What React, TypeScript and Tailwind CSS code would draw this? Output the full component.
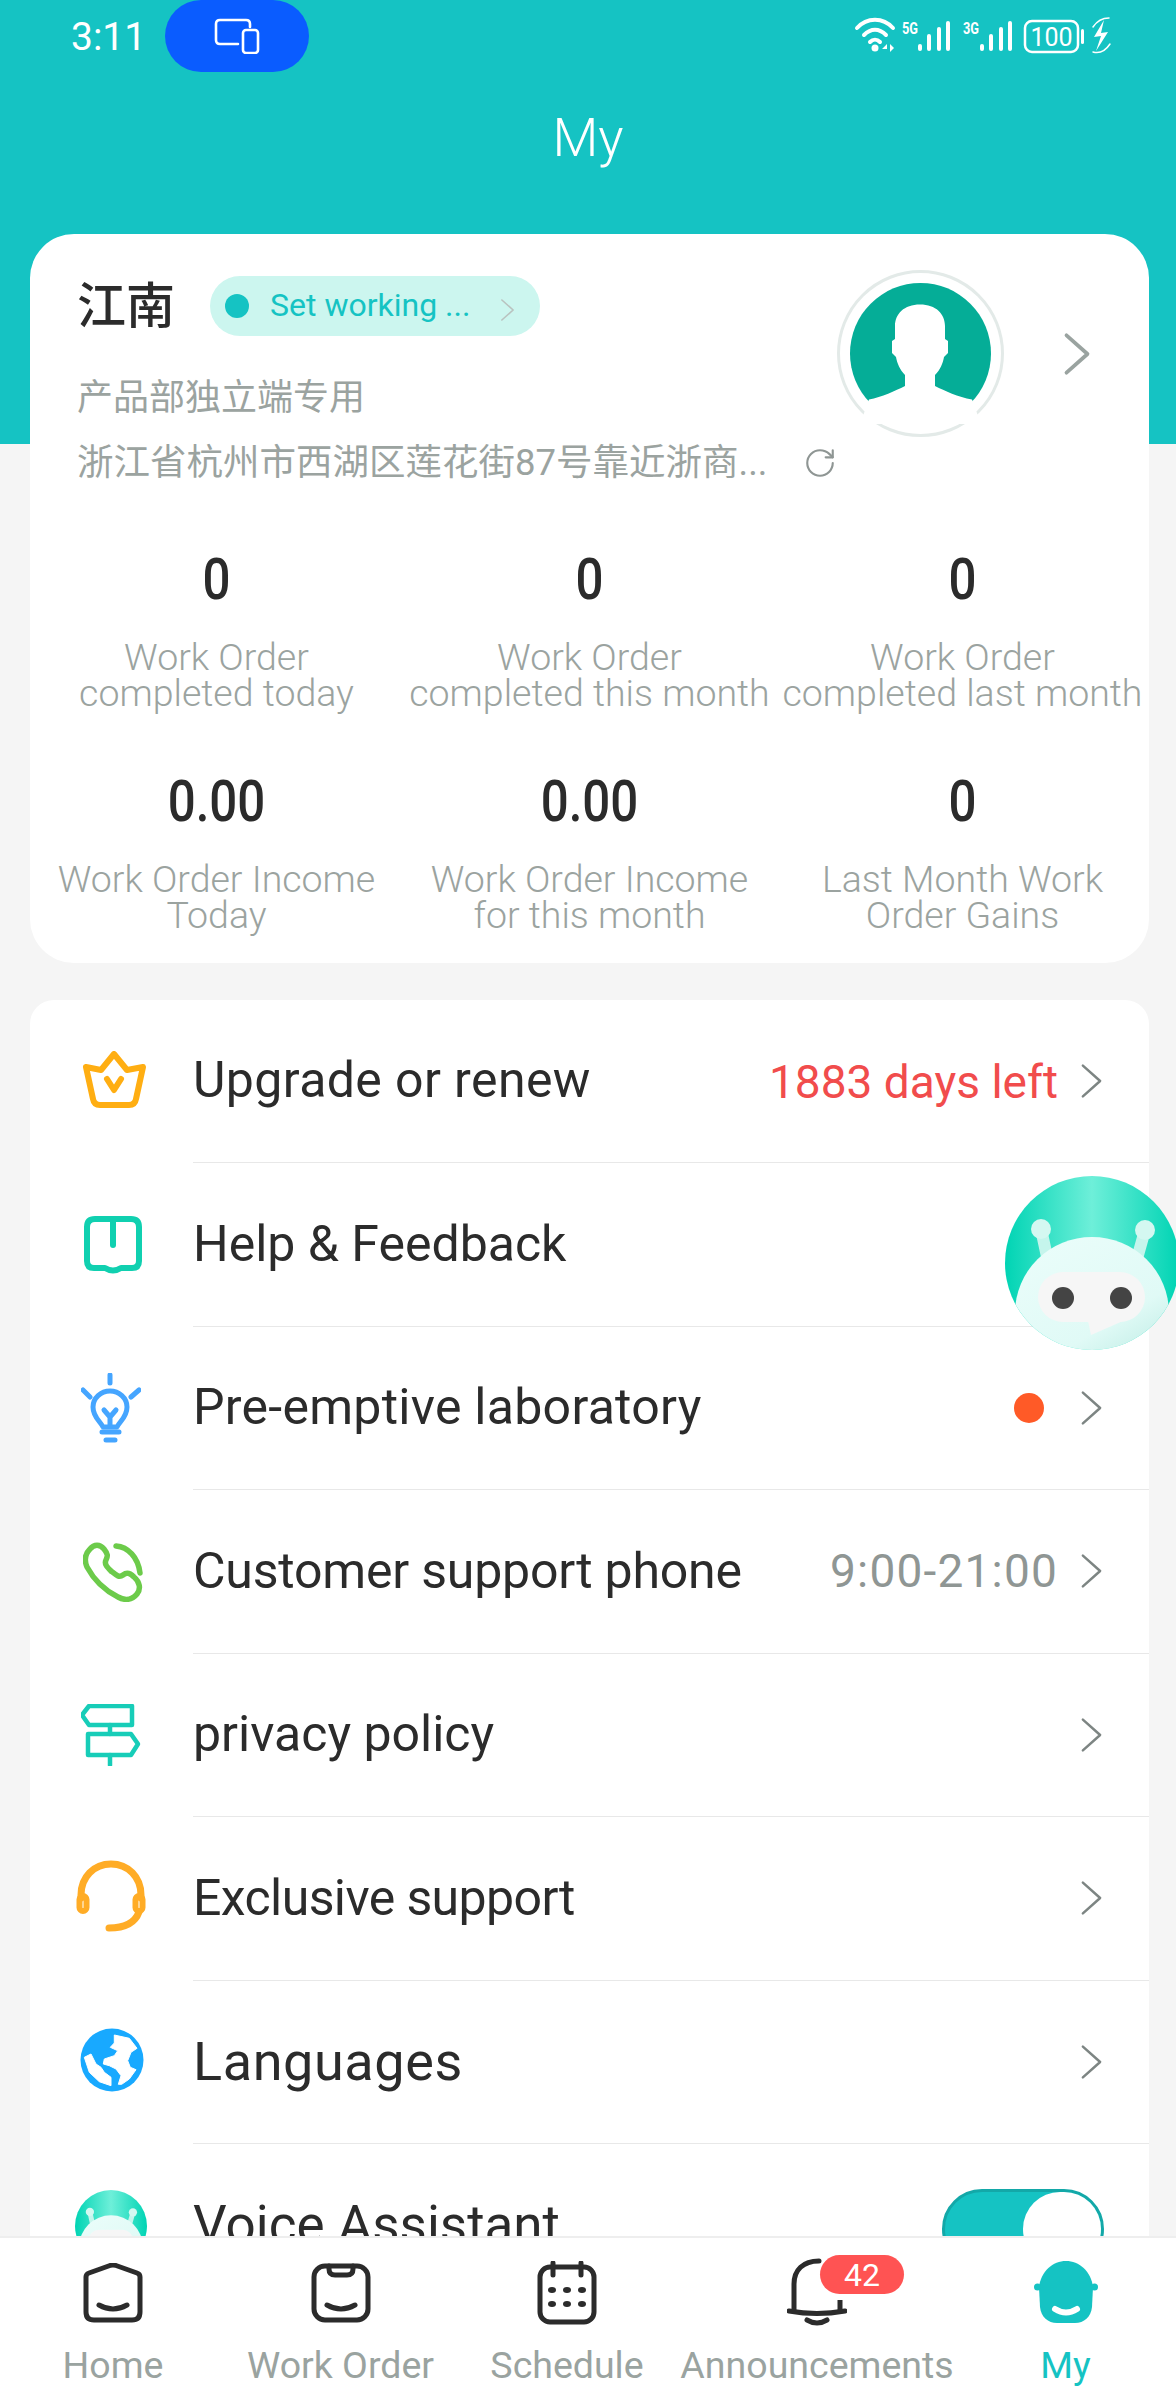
import { ReactNode } from "react";
import { RotateCw } from "lucide-react";

const TEAL = "#15c3c3";

function Chevron({ className = "" }: { className?: string }) {
  return (
    <svg className={className} viewBox="0 0 24 36" fill="none" stroke="currentColor" strokeLinecap="round" strokeLinejoin="round">
      <path d="M3 2 L21 18 L3 34" strokeWidth={2.6} />
    </svg>
  );
}

function StatusIcons() {
  return (
    <svg width="262" height="44" viewBox="0 0 262 44" fill="none" className="block">
      <g stroke="#fff" strokeWidth="4" strokeLinecap="round">
        <path d="M3 14 C13 3 29 3 39 14" />
        <path d="M10 21 C17 14 25 14 32 21" />
        <path d="M16 28 C19 25 23 25 26 28" />
      </g>
      <circle cx="21" cy="34" r="3.5" fill="#fff" />
      <path d="M33 30 l-5 5 h5 z M33 27 v11 M36 30 l4 4 -4 4 z" fill="#fff" />
      <text x="48" y="20" fill="#fff" fontSize="17" fontWeight="700" textLength="16" lengthAdjust="spacingAndGlyphs" fontFamily="Roboto, sans-serif">5G</text>
      <text x="109" y="20" fill="#fff" fontSize="17" fontWeight="700" textLength="16" lengthAdjust="spacingAndGlyphs" fontFamily="Roboto, sans-serif">3G</text>
      <g fill="#fff">
        <rect x="64" y="30" width="4" height="7" rx="2" />
        <rect x="73" y="20" width="4" height="17" rx="2" />
        <rect x="83" y="13" width="4" height="24" rx="2" />
        <rect x="92" y="7" width="4" height="30" rx="2" />
        <rect x="126" y="30" width="4" height="7" rx="2" />
        <rect x="135" y="20" width="4" height="17" rx="2" />
        <rect x="145" y="13" width="4" height="24" rx="2" />
        <rect x="154" y="7" width="4" height="30" rx="2" />
        <rect x="227" y="15" width="3" height="15" rx="1.5" />
      </g>
      <rect x="171" y="7" width="53" height="31" rx="7" stroke="#fff" strokeWidth="2.5" />
      <text x="197.5" y="32" textAnchor="middle" fill="#fff" fontSize="25" fontFamily="Roboto, sans-serif">100</text>
      <path d="M250 6 L240 23 L247 22 L242 37 L254 18 L247 19 Z" fill="#fff" />
      <path d="M239 13 C243 7 249 4 255 4 M239 38 C246 40 252 36 256 30" stroke="#fff" strokeWidth="1.5" strokeLinecap="round" />
    </svg>
  );
}

function DeviceIcon() {
  return (
    <svg width="46" height="36" viewBox="0 0 46 36" fill="none" stroke="#fff" strokeWidth="2.6" strokeLinecap="round" strokeLinejoin="round">
      <path d="M24 26 H6 Q2 26 2 22 V6 Q2 2 6 2 H32 Q36 2 36 6 V9" />
      <rect x="29" y="12" width="15" height="23" rx="3" />
    </svg>
  );
}

function Avatar() {
  return (
    <div className="flex h-[167px] w-[167px] items-center justify-center rounded-full border-[3px] border-[#e3eae8] bg-white">
      <svg width="141" height="141" viewBox="0 0 141 141">
        <circle cx="70.5" cy="70.5" r="70.5" fill="#05ad97" />
        <path
          d="M70 21.5 C54 21.5 45 31 45 43 L45 56 L42 58 V70 L46 74 C47 80 50 87 55 92 V103 C45 108 32 114 19 116.5 L10 141 H131 L122 116.5 C108 114 95 108 85 103 V92 C90 87 93 80 94 74 L98 70 V58 L95 56 V43 C95 31 86 21.5 70 21.5 Z"
          fill="#fff"
        />
      </svg>
    </div>
  );
}

function RobotIcon({ size, gradientId }: { size: number; gradientId: string }) {
  return (
    <svg width={size} height={size} viewBox="0 0 174 174" className="block">
      <defs>
        <linearGradient id={gradientId} x1="0" x2="1" y1="0" y2="0">
          <stop offset="0" stopColor="#00d4b4" />
          <stop offset="0.5" stopColor="#6eefd9" />
          <stop offset="1" stopColor="#00d4b4" />
        </linearGradient>
        <linearGradient id={`${gradientId}-h`} x1="0.2" x2="0.8" y1="0" y2="1">
          <stop offset="0" stopColor="#eafdfa" />
          <stop offset="0.6" stopColor="#e0faf6" />
          <stop offset="1" stopColor="#b4e8df" />
        </linearGradient>
        <clipPath id={`${gradientId}-c`}>
          <circle cx="87" cy="87" r="87" />
        </clipPath>
      </defs>
      <g clipPath={`url(#${gradientId}-c)`}>
        <rect width="174" height="174" fill={`url(#${gradientId})`} />
        <path d="M36 53 L44 90 M140 54 L130 90" stroke="#c5f5ec" strokeWidth="12" />
        <circle cx="36" cy="53" r="10" fill="#d4f8f1" />
        <circle cx="140" cy="54" r="10" fill="#d4f8f1" />
        <ellipse cx="87" cy="137" rx="77" ry="76" fill={`url(#${gradientId}-h)`} />
        <rect x="33" y="96" width="107" height="50" rx="25" fill="#f6f6f6" />
        <path d="M83 145 L86 159 L118 145 Z" fill="#f6f6f6" />
        <circle cx="58" cy="122" r="11" fill="#444" />
        <circle cx="116" cy="122" r="11" fill="#444" />
      </g>
    </svg>
  );
}

const CrownIcon = (
  <svg width="64" height="60" viewBox="0 0 64 60" fill="none" stroke="#ffae12" strokeWidth="6" strokeLinecap="round" strokeLinejoin="round" className="ml-[3px]">
    <path d="M31 3 L44 19 L60 16 L53 48 Q52 54 46 54 H17 Q11 54 10 48 L3 16 L18 19 Z" />
    <path d="M24 28 L31 39 L38 28" />
  </svg>
);

const BookIcon = (
  <svg width="60" height="60" viewBox="0 0 60 60" fill="none" stroke="#10d0b0" strokeWidth="6" strokeLinecap="round" strokeLinejoin="round">
    <path d="M4 46 V12 Q4 4 12 4 H48 Q56 4 56 12 V46 Q56 53 49 53 H38 Q30 58 22 53 H11 Q4 53 4 46 Z" />
    <path d="M30 4 V30" />
  </svg>
);

const BulbIcon = (
  <svg width="60" height="70" viewBox="0 0 60 70" fill="none" stroke="#45a5ff" strokeWidth="5" strokeLinecap="round" strokeLinejoin="round" className="-ml-[4px]">
    <path d="M29 2 V10 M2 17 L9 24 M58 17 L50 24" />
    <path d="M22 54 C19 48 12 44 12 34 C12 25 20 18 29 18 C38 18 46 25 46 34 C46 44 39 48 36 54 Z" />
    <path d="M23 37 L29 44 L35 37 M29 44 V53" />
    <path d="M21 59 H38 M25 67 H34" />
  </svg>
);

const PhoneIcon = (
  <svg width="60" height="60" viewBox="0 0 60 60" fill="none" stroke="#6ccb4a" strokeWidth="5.5" strokeLinecap="round" strokeLinejoin="round">
    <path d="M7 7 C11 2 17 2 21 7 C25 12 25 14 23 18 C21 22 24 25 28 29 C33 33 36 36 40 33 C44 30 47 31 51 35 C57 40 58 47 54 52 C49 58 42 59 35 55 C23 49 11 38 4 25 C1 18 2 12 7 7 Z" />
    <path d="M33 4 C45 5 55 15 57 31" />
  </svg>
);

const SignIcon = (
  <svg width="60" height="62" viewBox="0 0 60 62" fill="none" stroke="#17cdb8" strokeWidth="4.5" strokeLinecap="round" strokeLinejoin="round" className="-ml-[4px]">
    <path d="M8 2 H51 V21 H8 L1 11 Z" />
    <path d="M7 30 H50 L57 40 L50 51 H7 Z" />
    <path d="M29 21 V30 M29 51 V61" />
  </svg>
);

const HeadsetIcon = (
  <svg width="72" height="72" viewBox="0 0 72 72" fill="none" stroke="#ffac26" strokeWidth="7" strokeLinecap="round" className="-ml-[4px] -mt-[5px]">
    <path d="M6 38 V35 C6 17 19 4 36 4 C53 4 66 17 66 35 V38" />
    <rect x="4.5" y="36" width="7" height="15" rx="3.5" strokeWidth="6" />
    <rect x="60.5" y="36" width="7" height="15" rx="3.5" strokeWidth="6" />
    <path d="M64 52 C60 63 50 68 34 68" />
  </svg>
);

const GlobeIcon = (
  <svg width="64" height="64" viewBox="0 0 64 64" className="-ml-[3px] -mt-[5px]">
    <circle cx="32" cy="32" r="31.5" fill="#18a9ff" />
    <path
      d="M34.3 7 L49.3 10.3 L57 20.3 L51 24.3 L47.7 32.7 L50.3 39.3 L56 41.7 L49.3 51 L41.7 56.3 L38.3 56.3 L41 47.7 L36 41 L29.3 37.7 L23.3 36 L24.3 31 L34.3 27.7 L37.7 22.7 L30.3 19.3 L34.3 15 Z"
      fill="#fff"
      stroke="#fff"
      strokeLinejoin="round"
    />
    <path
      d="M4.3 29.3 L11 26 L16 36 L21 39.3 L24.3 44.3 L31 49.3 L31 57.7 L19.3 53.7 L9.3 44.3 Z"
      fill="#fff"
      stroke="#fff"
      strokeLinejoin="round"
    />
  </svg>
);

const menuRows: { icon: ReactNode; label: string; labelClass: string; right?: ReactNode }[] = [
  { icon: CrownIcon, label: "Upgrade or renew", labelClass: "text-[50px] tracking-[0.4px]", right: <span className="mt-[3px] text-[46px] text-[#f14c4c]">1883 days left</span> },
  { icon: BookIcon, label: "Help & Feedback", labelClass: "text-[50px]" },
  { icon: BulbIcon, label: "Pre-emptive laboratory", labelClass: "text-[50px] tracking-[0.27px]", right: <span className="mr-[14px] block h-[30px] w-[30px] rounded-full bg-[#ff5a27]" /> },
  { icon: PhoneIcon, label: "Customer support phone", labelClass: "text-[50px] tracking-[-0.2px]", right: <span className="text-[46px] tracking-[1.2px] text-[#8f9694]">9:00-21:00</span> },
  { icon: SignIcon, label: "privacy policy", labelClass: "text-[50px]" },
  { icon: HeadsetIcon, label: "Exclusive support", labelClass: "text-[50px] tracking-[-0.6px]" },
  { icon: GlobeIcon, label: "Languages", labelClass: "text-[54px] tracking-[0.6px]" },
];

const stats = [
  { value: "0", lines: ["Work Order", "completed today"] },
  { value: "0", lines: ["Work Order", "completed this month"] },
  { value: "0", lines: ["Work Order", "completed last month"] },
  { value: "0.00", lines: ["Work Order Income", "Today"] },
  { value: "0.00", lines: ["Work Order Income", "for this month"] },
  { value: "0", lines: ["Last Month Work", "Order Gains"] },
];

function Smile() {
  return <path d="M16 42 Q30 50 44 42" />;
}

const navItems: { label: string; active?: boolean; icon: ReactNode }[] = [
  {
    label: "Home",
    icon: (
      <svg width="60" height="60" viewBox="0 0 60 60" fill="none" stroke="#2b2b2b" strokeWidth="5" strokeLinecap="round" strokeLinejoin="round">
        <path d="M3 14 Q3 11 6 10 L27 2.5 Q30 1.5 33 2.5 L54 10 Q57 11 57 14 V49 Q57 57 49 57 H11 Q3 57 3 49 Z" />
        <Smile />
      </svg>
    ),
  },
  {
    label: "Work Order",
    icon: (
      <svg width="60" height="60" viewBox="0 0 60 60" fill="none" stroke="#2b2b2b" strokeWidth="5" strokeLinecap="round" strokeLinejoin="round">
        <rect x="3" y="3" width="54" height="54" rx="11" />
        <path d="M18 3 V6 Q18 12 24 12 H36 Q42 12 42 6 V3" />
        <Smile />
      </svg>
    ),
  },
  {
    label: "Schedule",
    icon: (
      <svg width="60" height="64" viewBox="0 0 60 64" fill="none" stroke="#2b2b2b" strokeWidth="5" strokeLinecap="round" strokeLinejoin="round">
        <rect x="3" y="6" width="54" height="55" rx="10" />
        <path d="M16 2 V14 M44 2 V14" />
        <g fill="#2b2b2b" stroke="none">
          <ellipse cx="15" cy="29" rx="4" ry="3" />
          <ellipse cx="30" cy="29" rx="4" ry="3" />
          <ellipse cx="45" cy="29" rx="4" ry="3" />
          <ellipse cx="15" cy="43" rx="4" ry="3" />
          <ellipse cx="30" cy="43" rx="4" ry="3" />
          <ellipse cx="45" cy="43" rx="4" ry="3" />
        </g>
      </svg>
    ),
  },
  {
    label: "Announcements",
    icon: (
      <div className="relative h-[70px] w-[60px]">
        <svg width="60" height="70" viewBox="0 0 60 70" fill="none" stroke="#2b2b2b" strokeWidth="5" strokeLinecap="round" strokeLinejoin="round">
          <path d="M7 52 V26 C7 12 16 3 32 3" />
          <path d="M53 42 V52" strokeLinecap="butt" />
          <path d="M2 53 Q30 58 58 53" />
          <path d="M20 62 Q30 68 40 62" />
        </svg>
        <span className="absolute left-[33px] top-[-3px] flex h-[39px] w-[84px] items-center justify-center rounded-full bg-[#ff5353] text-[32px] leading-none text-white">42</span>
      </div>
    ),
  },
  {
    label: "My",
    active: true,
    icon: (
      <svg width="66" height="64" viewBox="0 0 66 64">
        <path d="M6 26 C8 10 20 0 33 0 C46 0 58 10 60 26 L59 46 C58 56 51 62 42 62 H24 C15 62 8 56 7 46 Z" fill={TEAL} />
        <circle cx="4.5" cy="26" r="3.5" fill={TEAL} />
        <circle cx="61.5" cy="26" r="3.5" fill={TEAL} />
        <path d="M22 48 Q33 55 44 48" fill="none" stroke="#fff" strokeWidth="6" strokeLinecap="round" />
      </svg>
    ),
  },
];

export default function App() {
  return (
    <div className="relative flex h-[2400px] w-[1176px] flex-col overflow-hidden bg-[#f5f5f5] font-['Roboto','Noto_Sans_CJK_SC',sans-serif]">
      <div className="h-[2236px] overflow-hidden">
        <header className="h-[444px] bg-[#15c3c3] text-white">
          <div className="flex h-[72px] items-start">
            <span className="ml-[71px] mt-[15px] w-[94px] text-[39px] leading-[44px]">3:11</span>
            <span className="flex h-[72px] w-[144px] items-center justify-center rounded-[36px] bg-[#0a5cff]">
              <DeviceIcon />
            </span>
            <span className="ml-auto mr-[60px] mt-[14px]">
              <StatusIcons />
            </span>
          </div>
          <h1 className="mt-[33px] text-center text-[53px] font-light leading-[66px]">My</h1>
        </header>

        <section className="ml-[30px] -mt-[210px] h-[729px] w-[1119px] rounded-[44px] bg-white">
          <div className="flex items-start pl-[47px]">
            <div className="w-[760px] pt-[42px]">
              <div className="flex h-[60px] items-center">
                <span className="w-[133px] text-[49px] font-medium leading-none text-[#2b2b2b]">江南</span>
                <span className="flex h-[60px] w-[330px] items-center rounded-full bg-[#ccf6ef] pl-[15px]">
                  <span className="h-[24px] w-[24px] rounded-full bg-[#15c3c3]" />
                  <span className="-mt-[2px] ml-[21px] w-[230px] text-[32px] text-[#15c3c3]">Set working ...</span>
                  <Chevron className="mt-[8px] h-[28px] w-[15px] text-[#b9c2bf]" />
                </span>
              </div>
              <p className="mt-[38px] text-[36px] leading-[48px] text-[#9ba3a0]">产品部独立端专用</p>
              <div className="mt-[17px] flex items-center">
                <p className="w-[726px] whitespace-nowrap text-[36.5px] leading-[48px] text-[#9ba3a0]">浙江省杭州市西湖区莲花街87号靠近浙商...</p>
                <RotateCw size={34} strokeWidth={1.5} className="text-[#8f9694]" />
              </div>
            </div>
            <div className="mt-[36px]">
              <Avatar />
            </div>
            <Chevron className="ml-[59px] mt-[97px] h-[46px] w-[28px] text-[#9aa3a0] [&_path]:[stroke-width:3.2]" />
          </div>

          <div className="mt-[62px] grid grid-cols-3 gap-y-[60px]">
            {stats.map((stat, i) => (
              <div key={i} className="flex flex-col items-center text-center">
                <span className="h-[60px] scale-x-[0.85] text-[58px] font-medium leading-[60px] text-[#2b2b2b]">{stat.value}</span>
                <span className="mt-[30px] whitespace-nowrap text-[37.5px] font-light leading-[36px] text-[#9ba3a0]">
                  {stat.lines[0]}
                  <br />
                  {stat.lines[1]}
                </span>
              </div>
            ))}
          </div>
        </section>

        <section className="ml-[30px] mt-[36.5px] w-[1119px] rounded-[24px] bg-white">
          {menuRows.map((row) => (
            <div key={row.label} className="flex h-[163.5px] items-center pl-[47px]">
              <span className="flex w-[72px] shrink-0 items-center justify-center">{row.icon}</span>
              <div className="ml-[44px] flex h-full flex-1 items-center border-b border-[#e8e8e8] pr-[46px]">
                <span className={`text-[#2b2b2b] ${row.labelClass}`}>{row.label}</span>
                <span className="ml-auto flex items-center gap-[22px]">
                  {row.right}
                  <Chevron className="h-[36px] w-[23px] text-[#7d8583]" />
                </span>
              </div>
            </div>
          ))}
          <div className="flex h-[163.5px] items-center pl-[45px]">
            <span className="flex w-[72px] shrink-0 items-center justify-center">
              <RobotIcon size={72} gradientId="robot-small" />
            </span>
            <div className="ml-[46px] flex flex-1 items-center pr-[45px]">
              <span className="text-[53px] text-[#2b2b2b]">Voice Assistant</span>
              <span className="ml-auto mt-[6px] flex h-[80px] w-[162px] items-center justify-end rounded-full border-[3px] border-[#13a8a8] bg-[#15c3c3]">
                <span className="h-[74px] w-[78px] rounded-full bg-white" />
              </span>
            </div>
          </div>
        </section>
      </div>

      <nav className="grid h-[164px] grid-cols-[226px_229px_224px_276px_221px] border-t-2 border-[#eeeeee] bg-white pt-[23px]">
        {navItems.map((item) => (
          <div key={item.label} className="flex flex-col items-center">
            <div className="flex h-[64px] items-center justify-center">{item.icon}</div>
            <span className={`mt-[16px] text-[37.5px] leading-[48px] ${item.active ? "text-[#15c3c3]" : "text-[#9aa3a0]"}`}>{item.label}</span>
          </div>
        ))}
      </nav>

      {/* floating assistant */}
      <div className="absolute left-[1005px] top-[1176px]">
        <RobotIcon size={174} gradientId="robot-float" />
      </div>
    </div>
  );
}
